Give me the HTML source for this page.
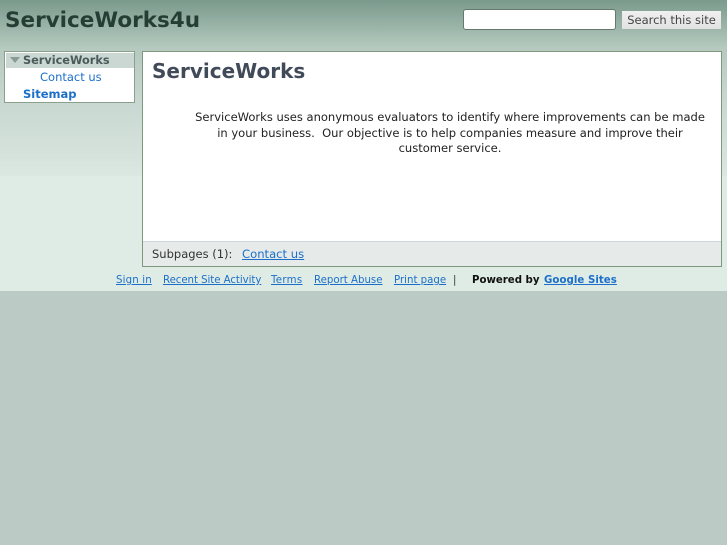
<!DOCTYPE html>
<html><head><meta charset="utf-8"><style>
html,body{margin:0;padding:0;width:727px;height:545px;overflow:hidden;background:#bccac5;font-family:"DejaVu Sans",sans-serif;font-size:12px;color:#222}
a{color:#1c6fc9}
.abs{position:absolute;white-space:nowrap}
#bg{position:absolute;left:0;top:0;width:727px;height:291px;background:#dfece5}
#grad{position:absolute;left:0;top:0;width:727px;height:176px;background:linear-gradient(#7a9a8c 0,#b5c9bf 48px,#c8d7d1 100px,#dbe7e1 176px)}
</style></head><body>
<div id="bg"></div><div id="grad"></div>
<div class="abs" style="left:5px;top:7px;font-size:21.5px;font-weight:bold;color:#253d35;line-height:28px">ServiceWorks4u</div>
<div class="abs" style="left:463px;top:9px;width:151px;height:19px;background:#fff;border:1px solid #67796f;border-radius:3px"></div>
<div class="abs" style="left:622px;top:11px;width:99px;height:18px;background:linear-gradient(#f0f0f0,#e2e2e2);text-align:center;line-height:18px;color:#444;font-size:11.5px">Search this site</div>

<div class="abs" style="left:4px;top:51px;width:129px;height:50px;background:#fff;border:1px solid #8aa08a"></div>
<div class="abs" style="left:6px;top:53px;width:128px;height:15px;background:#cad7d2"></div>
<div class="abs" style="left:10px;top:57px;width:0;height:0;border-left:5px solid transparent;border-right:5px solid transparent;border-top:6px solid #8a9a94"></div>
<div class="abs" style="left:23px;top:53px;font-size:11.3px;font-weight:bold;color:#4a5a5a;line-height:15px">ServiceWorks</div>
<div class="abs" style="left:40px;top:69px;font-size:11.5px;color:#1c6fc9;line-height:16px">Contact us</div>
<div class="abs" style="left:23px;top:86px;font-size:11.5px;font-weight:bold;color:#1c6fc9;line-height:16px">Sitemap</div>

<div class="abs" style="left:142px;top:51px;width:578px;height:214px;background:#fff;border:1px solid #7f967f"></div>
<div class="abs" style="left:143px;top:241px;width:578px;height:24px;background:#e6ebe9;border-top:1px solid #cdd6e0"></div>
<div class="abs" style="left:152px;top:58px;font-size:20px;font-weight:bold;color:#404a58;line-height:26px">ServiceWorks</div>
<div class="abs" style="left:150px;top:110px;width:600px;text-align:center;font-size:11.53px;line-height:15.6px;color:#222">ServiceWorks uses anonymous evaluators to identify where improvements can be made<br>in your business.&nbsp; Our objective is to help companies measure and improve their<br>customer service.</div>
<div class="abs" style="left:152px;top:246px;font-size:11.5px;line-height:16px;color:#333">Subpages (1):</div>
<a class="abs" style="left:242px;top:246px;font-size:11.6px;line-height:16px" href="#">Contact us</a>

<div class="abs" style="left:0;top:274px;font-size:10.2px;line-height:14px">
<a class="abs" style="left:116px;letter-spacing:.15px" href="#">Sign in</a>
<a class="abs" style="left:163px;letter-spacing:-.05px" href="#">Recent Site Activity</a>
<a class="abs" style="left:271px;letter-spacing:.3px" href="#">Terms</a>
<a class="abs" style="left:314px" href="#">Report Abuse</a>
<a class="abs" style="left:394px" href="#">Print page</a>
<span class="abs" style="left:453px;color:#333">|</span>
<b class="abs" style="left:472px;color:#111">Powered by</b>
<a class="abs" style="left:544px;font-weight:bold;letter-spacing:.05px" href="#">Google Sites</a>
</div>
</body></html>
